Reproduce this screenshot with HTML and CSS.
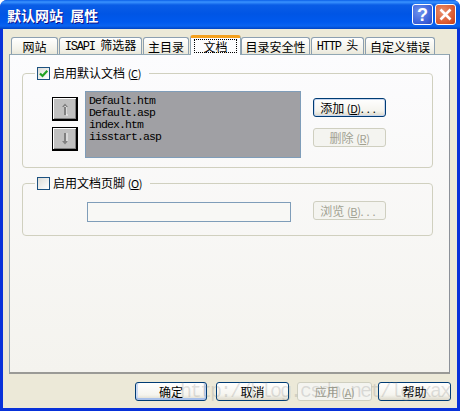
FILE: index.html
```html
<!DOCTYPE html>
<html lang="zh">
<head>
<meta charset="utf-8">
<title>默认网站 属性</title>
<link rel="stylesheet" href="styles.css">
</head>
<body>
<div class="window">
  <header class="titlebar">
    <span class="title">默认网站 属性</span>
    <div class="caption-buttons">
      <span class="cap cap-help">?</span>
      <span class="cap cap-close">
        <svg width="13" height="13" viewBox="0 0 13 13"><path d="M1.5 1.5l10 10M11.5 1.5l-10 10" stroke="#fff" stroke-width="2.6" fill="none"/></svg>
      </span>
    </div>
  </header>
  <div class="client">
    <nav class="tabs">
      <span class="tab t1">网站</span>
      <span class="tab t2"><span><span class="mono">ISAPI</span> 筛选器</span></span>
      <span class="tab t3">主目录</span>
      <span class="tab active t4"><span class="focus">文档</span></span>
      <span class="tab t5">目录安全性</span>
      <span class="tab t6"><span><span class="mono">HTTP</span> 头</span></span>
      <span class="tab t7">自定义错误</span>
    </nav>
    <section class="panel">
      <fieldset class="group group-docs">
        <legend class="legend">
          <span class="check">
            <svg width="11" height="11" viewBox="0 0 11 11"><path d="M2 5.5l2.5 2.5 4.8-5.2" stroke="#21a121" stroke-width="2.2" fill="none"/></svg>
          </span>
          <span class="label">启用默认文档 <span class="mn">(<u>C</u>)</span></span>
        </legend>
        <div class="docs-row">
          <div class="arrows">
            <span class="arrow">
              <svg width="12" height="14" viewBox="0 0 12 14"><path d="M7 3v10h2" stroke="#f4f4f4" stroke-width="1" fill="none"/><path d="M3 5h6L6 1.5zM5 4h2v9H5z" fill="#808080"/></svg>
            </span>
            <span class="arrow">
              <svg width="12" height="14" viewBox="0 0 12 14"><path d="M8 1v9" stroke="#f4f4f4" stroke-width="1" fill="none"/><path d="M3 9h6l-3 3.5zM5 1h2v9H5z" fill="#808080"/></svg>
            </span>
          </div>
          <div class="list">
            <div>Default.htm</div>
            <div>Default.asp</div>
            <div>index.htm</div>
            <div>iisstart.asp</div>
          </div>
          <div class="side-buttons">
            <button class="btn btn-default"><span>添加 <span class="mn">(<u>D</u>)<span class="dots">...</span></span></span></button>
            <button class="btn btn-off"><span>删除 <span class="mn">(<u>R</u>)</span></span></button>
          </div>
        </div>
      </fieldset>
      <fieldset class="group group-footer">
        <legend class="legend">
          <span class="check check-off"></span>
          <span class="label">启用文档页脚 <span class="mn">(<u>O</u>)</span></span>
        </legend>
        <div class="footer-row">
          <div class="input"></div>
          <button class="btn btn-off"><span>浏览 <span class="mn">(<u>B</u>)<span class="dots">...</span></span></span></button>
        </div>
      </fieldset>
    </section>
    <footer class="actions">
      <button class="btn act a1 btn-primary">确定</button>
      <button class="btn act a2">取消</button>
      <button class="btn act a3 btn-off"><span>应用 <span class="mn">(<u>A</u>)</span></span></button>
      <button class="btn act a4">帮助</button>
    </footer>
    <div class="watermark">http://blog.csdn.net/lgxxax</div>
  </div>
</div>
</body>
</html>
```
FILE: styles.css
```css
* { box-sizing: border-box; }
html, body { margin: 0; padding: 0; background: #fff; }
body { font: 12px "Noto Sans CJK SC", "Liberation Sans", sans-serif; color: #000; overflow: hidden; }

.window {
  width: 460px; height: 411px;
  display: flex; flex-direction: column;
  background: #0831d9;
  border-radius: 7px 7px 0 0;
  overflow: hidden;
}
.titlebar {
  height: 29px; flex: none;
  display: flex; align-items: center; justify-content: space-between;
  padding: 0 4px 0 7px;
  background: linear-gradient(#0a5fe8 0, #3a93ff 2px, #0a5de6 5px, #0055e5 14px, #0059ee 22px, #0a63f0 26px, #0043c4 29px);
}
.title {
  color: #fff; font-weight: 700; font-size: 14px; line-height: 16px;
  word-spacing: 4px;
  text-shadow: 1px 1px 0 #0f1089;
}
.caption-buttons { display: flex; gap: 2px; }
.cap {
  width: 21px; height: 21px;
  display: flex; align-items: center; justify-content: center;
  border: 1px solid #fff; border-radius: 3px;
  color: #fff; font: 700 18px/1 "Liberation Sans", sans-serif;
}
.cap-help { background: radial-gradient(circle at 35% 35%, #6f93ee, #3a5fd8 70%, #2b46b8); }
.cap-close { background: radial-gradient(circle at 35% 35%, #e9906f, #da5a30 65%, #c33b15); }

.client {
  flex: 1; min-height: 0;
  position: relative;
  margin: 0 3px 3px 3px;
  padding: 6px 6px 0 6px;
  background: #ece9d8;
  display: flex; flex-direction: column;
}
.tabs { height: 19px; flex: none; display: flex; align-items: flex-end; padding-left: 2px; position: relative; z-index: 1; }
.tab {
  height: 17px; margin-right: 1px;
  display: flex; align-items: center; justify-content: center; white-space: nowrap;
  background: linear-gradient(#fff, #f3f2ea 70%, #e9e7d9);
  border: 1px solid #8c9fb0; border-bottom: 0;
  border-radius: 3px 3px 0 0;
  line-height: 15px;
  word-spacing: 3px;
}
.mono { font: 12px/15px "Liberation Mono", monospace; letter-spacing: -1.2px; }
.t1 { width: 47px; } .t2 { width: 83px; } .t3 { width: 46px; }
.t4 { width: 51px; margin-right: 0; }
.t5 { width: 69px; margin-right: 1px; } .t6 { width: 53px; } .t7 { width: 70px; }
.tab.active {
  height: 20px; margin-bottom: -1px;
  background: #fcfcfe;
  border-color: #91a7b4; border-top: 3px solid #f4a01c;
  padding: 0 3px 1px;
}
.focus { flex: 1; text-align: center; height: 14px; line-height: 13px; border: 1px dotted #000; }

.panel {
  height: 320px; flex: none; width: 441px;
  display: flex; flex-direction: column; gap: 6px;
  padding: 9px 16px 0 12px;
  background: linear-gradient(#fcfcfe, #f4f3ee);
  border: 1px solid #91a7b4;
  border-right-color: #8c9199; border-bottom: 2px solid #9a9a96;
}
.group {
  margin: 0; min-width: 0;
  width: 411px;
  border: 1px solid #d0d0bf; border-radius: 4px;
  padding: 0;
}
.legend {
  padding: 0 8px 0 2px; margin-left: 12px;
  height: 18px; line-height: 18px;
  display: flex; align-items: center; gap: 3px; white-space: nowrap;
}
.label { display: block; }
.mn { font-size: 11px; letter-spacing: -.4px; }
.dots { letter-spacing: 3px; }
.check {
  width: 13px; height: 13px; flex: none;
  display: flex; align-items: center; justify-content: center;
  border: 1px solid #1c5180;
  background: linear-gradient(135deg, #dcdcd7, #fff);
}
.group-docs { height: 104px; }
.group-footer { height: 62px; }
.docs-row { display: flex; align-items: flex-start; padding: 9px 0 0 29px; }
.arrows { width: 33px; flex: none; display: flex; flex-direction: column; gap: 6px; padding-top: 6px; }
.arrow {
  width: 26px; height: 24px;
  display: flex; align-items: center; justify-content: center;
  background: #c0c0c0;
  border: 1px solid #000; border-right-width: 2px; border-bottom-width: 2px;
  box-shadow: inset 1px 1px 0 #fff, inset -1px -1px 0 #808080;
}
.list {
  width: 216px; height: 67px; flex: none;
  padding: 3px 3px;
  background: #a0a0a4;
  border: 1px solid #7f9db9;
  font: 11.5px/12px "Liberation Mono", monospace; letter-spacing: -.9px;
}
.side-buttons { display: flex; flex-direction: column; gap: 11px; padding: 7px 0 0 12px; }
.btn {
  width: 73px; height: 19px; padding: 0;
  font: 12px/15px "Noto Sans CJK SC", sans-serif; color: #000;
  display: flex; align-items: center; justify-content: center; white-space: nowrap;
  border: 1px solid #003c74; border-radius: 3px;
  background: linear-gradient(#fff, #f5f4ee 70%, #dcd8ca);
}
.btn-default { box-shadow: inset 0 0 0 1px #c6d5ee; }
.btn-primary { box-shadow: inset 0 -2px 0 #a8c0ea, inset 2px 0 0 #cbdaf3, inset -2px 0 0 #cbdaf3; }
.btn-off {
  color: #a1a192; background: #f4f4f0; border-color: #cfcfc0;
}
.footer-row { display: flex; align-items: flex-start; gap: 22px; padding: 9px 0 0 64px; }
.input { width: 204px; height: 20px; margin-top: 1px; background: #f8f8f5; border: 1px solid #7f9db9; }

.actions { position: relative; flex: none; display: flex; padding: 8px 0 0 126px; }
.act { height: 19px; }
.a1 { width: 72px; margin-right: 9px; }
.a2 { width: 73px; margin-right: 8px; }
.a3 { width: 75px; margin-right: 6px; }
.a4 { width: 73px; }

.watermark {
  position: absolute; left: 177px; top: 352px;
  font: 20px/22px "Liberation Mono", monospace;
  letter-spacing: -2px;
  color: rgba(120,120,120,.22);
  white-space: nowrap;
  pointer-events: none;
}
```
